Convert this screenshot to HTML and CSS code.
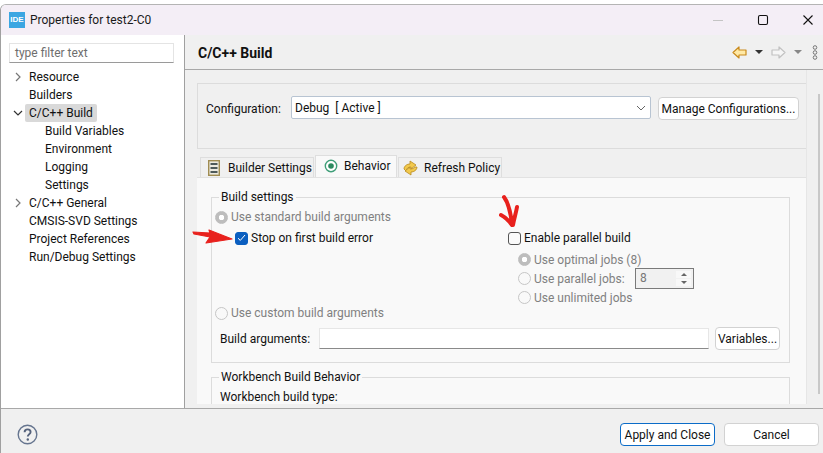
FILE: index.html
```html
<!DOCTYPE html>
<html lang="en">
<head>
<meta charset="utf-8">
<title>Properties for test2-C0</title>
<link rel="stylesheet" href="styles.css">
</head>
<body>
<div class="window">
  <header class="titlebar">
    <span class="logo">IDE</span>
    <span class="title">Properties for test2-C0</span>
    <div class="controls">
      <svg width="12" height="12" viewBox="0 0 12 12" class="ctl"><path d="M1 6.5h10" stroke="#c4c4c4" fill="none"/></svg>
      <svg width="12" height="12" viewBox="0 0 12 12" class="ctl"><rect x="1.5" y="1.5" width="9" height="9" rx="1.5" stroke="#111" stroke-width="1.1" fill="none"/></svg>
      <svg width="12" height="12" viewBox="0 0 12 12" class="ctl"><path d="M1.5 1.5l9 9M10.5 1.5l-9 9" stroke="#111" stroke-width="1.1" fill="none"/></svg>
    </div>
  </header>
  <div class="main">
    <aside class="sidebar">
      <div class="filter">type filter text</div>
      <ul class="tree">
        <li class="node"><svg class="twist" width="10" height="10" viewBox="0 0 10 10"><path d="M3 1l4 4-4 4" stroke="#777" stroke-width="1.2" fill="none"/></svg><span>Resource</span></li>
        <li class="node"><span class="spacer"></span><span>Builders</span></li>
        <li class="node"><svg class="twist" width="10" height="10" viewBox="0 0 10 10"><path d="M1 3l4 4 4-4" stroke="#333" stroke-width="1.2" fill="none"/></svg><span class="selected">C/C++ Build</span></li>
        <li class="node child">Build Variables</li>
        <li class="node child">Environment</li>
        <li class="node child">Logging</li>
        <li class="node child">Settings</li>
        <li class="node"><svg class="twist" width="10" height="10" viewBox="0 0 10 10"><path d="M3 1l4 4-4 4" stroke="#777" stroke-width="1.2" fill="none"/></svg><span>C/C++ General</span></li>
        <li class="node"><span class="spacer"></span><span>CMSIS-SVD Settings</span></li>
        <li class="node"><span class="spacer"></span><span>Project References</span></li>
        <li class="node"><span class="spacer"></span><span>Run/Debug Settings</span></li>
      </ul>
    </aside>
    <main class="content">
      <div class="page-head">
        <h1>C/C++ Build</h1>
        <div class="nav">
          <svg width="15" height="13" viewBox="0 0 15 13"><path d="M1 6.5L7 1v3h7v5H7v3z" fill="#ffe9a6" stroke="#c98a1c" stroke-width="1.2" stroke-linejoin="round"/></svg>
          <span class="caret"></span>
          <svg class="nav-fwd" width="15" height="13" viewBox="0 0 15 13"><path d="M14 6.5L8 1v3H1v5h7v3z" fill="#f6f6f6" stroke="#c2c2c2" stroke-width="1.2" stroke-linejoin="round"/></svg>
          <span class="caret muted"></span>
          <svg class="kebab" width="6" height="15" viewBox="0 0 6 15"><g fill="none" stroke="#777"><circle cx="3" cy="2.5" r="1.8"/><circle cx="3" cy="7.5" r="1.8"/><circle cx="3" cy="12.5" r="1.8"/></g></svg>
        </div>
      </div>
      <div class="scroller">
        <div class="body">
          <section class="config">
            <label class="config-label">Configuration:</label>
            <div class="combo"><span>Debug&nbsp; [ Active ]</span><svg width="10" height="6" viewBox="0 0 10 6"><path d="M1 1l4 4 4-4" stroke="#666" fill="none"/></svg></div>
            <button class="btn manage">Manage Configurations...</button>
          </section>
          <div class="tabs">
            <div class="tab tab-builder">
              <svg width="12" height="16" viewBox="0 0 12 16"><rect x=".7" y=".7" width="10.6" height="14.6" fill="#eceae0" stroke="#a08c52" stroke-width="1.4"/><path d="M2.5 4h7M2.5 8h7M2.5 12h7" stroke="#4e5a5a" stroke-width="2"/></svg>
              Builder Settings
            </div>
            <div class="tab tab-behavior active">
              <svg width="14" height="14" viewBox="0 0 14 14"><circle cx="7" cy="7" r="5.7" fill="#fff" stroke="#3f9e78" stroke-width="1.4"/><circle cx="7" cy="7" r="2.8" fill="#2c8a5f"/></svg>
              Behavior
            </div>
            <div class="tab tab-refresh">
              <svg width="15" height="16" viewBox="0 0 15 16"><g fill="#f2c94c" stroke="#b98a1e" stroke-width=".8" stroke-linejoin="round"><path d="M1 9c0-3 3-5 6-5V1l6 4-5 4V7C5 7 4 8 3 11z"/><path d="M14 7c0 3-3 5-6 5v3L2 11l5-4v2c3 0 4-1 5-2z"/></g></svg>
              Refresh Policy
            </div>
          </div>
          <div class="panel">
            <fieldset class="group settings">
              <legend>Build settings</legend>
              <div class="opt std disabled"><span class="radio on"></span>Use standard build arguments</div>
              <div class="columns">
                <div class="opt stop"><span class="check on"><svg width="9" height="8" viewBox="0 0 9 8"><path d="M1 4.2l2.3 2.2L8 1" stroke="#fff" fill="none"/></svg></span>Stop on first build error</div>
                <div class="parallel">
                  <div class="opt enable"><span class="check"></span>Enable parallel build</div>
                  <div class="opt sub disabled"><span class="radio on"></span>Use optimal jobs (8)</div>
                  <div class="opt sub disabled"><span class="radio"></span><span class="jobs-label">Use parallel jobs:</span>
                    <span class="spin"><span class="spin-val">8</span><span class="spin-btns"><i class="up"></i><i class="down"></i></span></span>
                  </div>
                  <div class="opt sub disabled"><span class="radio"></span>Use unlimited jobs</div>
                </div>
              </div>
              <div class="opt custom disabled"><span class="radio"></span>Use custom build arguments</div>
              <div class="args">
                <span class="args-label">Build arguments:</span>
                <span class="args-field"></span>
                <button class="btn vars">Variables...</button>
              </div>
            </fieldset>
            <fieldset class="group workbench">
              <legend>Workbench Build Behavior</legend>
              <div class="wb-type">Workbench build type:</div>
            </fieldset>
          </div>
        </div>
        <div class="scrollbar"></div>
      </div>
    </main>
  </div>
  <footer class="footer">
    <svg width="21" height="21" viewBox="0 0 21 21"><circle cx="10.5" cy="10.5" r="9.3" fill="none" stroke="#66758f" stroke-width="1.4"/><path d="M7.6 8.2c0-1.8 1.3-2.8 3-2.8s3 1 3 2.6c0 2.2-2.8 2.2-2.8 4.4" fill="none" stroke="#55627c" stroke-width="1.9"/><circle cx="10.8" cy="15.5" r="1.2" fill="#55627c"/></svg>
    <div class="actions">
      <button class="btn primary">Apply and Close</button>
      <button class="btn cancel">Cancel</button>
    </div>
  </footer>
  <svg class="arrow arrow-left" width="46" height="18" viewBox="0 0 46 18"><path d="M1 5L18 6 17 3 40 12 14 16 18 10 2 7z" fill="#e8211d" stroke="#e8211d" stroke-width="1.2" stroke-linejoin="round"/></svg>
  <svg class="arrow arrow-down" width="22" height="34" viewBox="0 0 22 34"><path d="M5 3c3 4 6 10 8 27M2 21c4 2 8 6 11 10M18 13c-1 6-3 12-4 18" fill="none" stroke="#e8211d" stroke-width="4" stroke-linecap="round" stroke-linejoin="round"/></svg>
</div>
</body>
</html>
```
FILE: styles.css
```css
* { box-sizing: border-box; }
html, body { margin: 0; height: 100%; }
body {
  background: #fff;
  font-family: Roboto, "Open Sans", sans-serif;
  font-size: 12px;
  color: #111;
  overflow: hidden;
}
ul { list-style: none; margin: 0; padding: 0; }
.window {
  position: relative;
  margin-top: 4px;
  height: 449px;
  display: flex;
  flex-direction: column;
  border-top: 1px solid #b4b4b4;
  border-left: 1px solid #a0a0a0;
  border-top-left-radius: 6px;
  overflow: hidden;
}
.titlebar {
  height: 30px;
  flex: none;
  display: flex;
  align-items: center;
  background: #f4eef6;
  padding-left: 8px;
}
.logo {
  width: 16px;
  height: 16px;
  background: #3ba6e2;
  color: #fff;
  font-family: "Liberation Sans", sans-serif;
  font-size: 8px;
  font-weight: 700;
  line-height: 16px;
  text-align: center;
}
.title { margin-left: 5px; color: #1a1a1a; }
.controls { margin-left: auto; display: flex; gap: 33px; padding-right: 9px; }
.main { flex: 1; display: flex; min-height: 0; }
.sidebar {
  width: 184px;
  flex: none;
  background: #fff;
  border-right: 1px solid #a0a0a0;
  padding: 8px 10px 0 8px;
}
.filter {
  height: 20px;
  width: 165px;
  border: 1px solid #e4e4e4;
  border-bottom-color: #9a9a9a;
  padding-left: 5px;
  line-height: 18px;
  color: #6e6e6e;
}
.tree { margin-top: 5px; }
.node { height: 18px; line-height: 18px; display: flex; align-items: center; margin-left: 4px; white-space: nowrap; }
.twist { flex: none; margin-right: 2px; }
.spacer { width: 12px; flex: none; }
.node > span:last-child { padding: 0 4px; }
.selected { background: #d9d9d9; border-radius: 2px; }
.child { padding-left: 32px; }
.content { flex: 1; min-width: 0; background: #f0f0f0; display: flex; flex-direction: column; }
.page-head {
  height: 35px;
  flex: none;
  display: flex;
  align-items: center;
  padding: 0 5px 0 13px;
  border-bottom: 1px solid #a8a8a8;
}
h1 { margin: 0; padding-top: 2px; font-size: 14px; font-weight: 700; }
.nav { margin-left: auto; display: flex; align-items: center; }
.caret { width: 0; height: 0; margin: 0 8px; border: 4px solid transparent; border-top: 4px solid #333; border-bottom: 0; }
.caret.muted { border-top-color: #888; }
.kebab { margin-left: 2px; }
.scroller { flex: 1; min-height: 0; display: flex; overflow: hidden; }
.body { width: 622px; flex: none; padding: 13px 0 0 12px; height: 334px; overflow: hidden; border-right: 1px solid #e6e6e6; }
.scrollbar { width: 2px; margin: 24px 0 0 11px; height: 300px; background: #c8c8c8; }
.config {
  height: 66px;
  width: 613px;
  border: 1px solid #dcdcdc;
  display: flex;
  align-items: flex-start;
  padding: 12px 10px 0 8px;
}
.config-label { width: 85px; flex: none; line-height: 27px; }
.combo {
  width: 360px;
  height: 23px;
  flex: none;
  background: #fff;
  border: 1px solid #b8c4d2;
  border-radius: 2px;
  display: flex;
  align-items: center;
  justify-content: space-between;
  padding: 1px 4px 0 3px;
}
.btn {
  font: inherit;
  color: #111;
  background: #fff;
  border: 1px solid #d2d2d2;
  border-radius: 4px;
  padding: 1px 0 0;
  white-space: nowrap;
}
.manage { width: 143px; height: 23px; margin: 1px 0 0 7px; }
.tabs { display: flex; align-items: flex-end; height: 28px; padding-left: 3px; }
.tab {
  height: 20px;
  flex: none;
  display: flex;
  align-items: center;
  background: #f0f0f0;
  border: 1px solid #dedede;
  border-bottom: 0;
  white-space: nowrap;
}
.tab.active { height: 22px; background: #f9f9f9; padding-bottom: 2px; margin: 0 1px; }
.tab-builder { width: 114px; padding-left: 7px; gap: 8px; }
.tab-behavior { width: 82px; padding-left: 8px; gap: 6px; }
.tab-refresh { width: 104px; padding-left: 4px; gap: 6px; }
.panel {
  background: #f9f9f9;
  width: 609px;
  height: 228px;
  padding: 11px 0 0 14px;
  border-top: 1px solid #e2e2e2;
}
.group {
  margin: 0;
  padding: 0;
  border: 1px solid #dcdcdc;
  width: 579px;
  min-width: 0;
}
legend { padding: 0 2px; margin-left: 7px; line-height: 16px; }
.settings { height: 174px; }
.opt { display: flex; align-items: center; height: 20px; white-space: nowrap; }
.disabled { color: #808080; }
.radio {
  width: 13px;
  height: 13px;
  flex: none;
  border: 1.5px solid #c6c6c6;
  border-radius: 50%;
  background: #f9f9f9;
  margin-right: 3px;
}
.radio.on { background: radial-gradient(circle, #fff 0 2.5px, #bdbdbd 3px); border-color: #bdbdbd; }
.check {
  width: 13px;
  height: 13px;
  flex: none;
  border: 1px solid #555;
  border-radius: 3px;
  background: #fafafa;
  margin-right: 3px;
  display: flex;
  align-items: center;
  justify-content: center;
}
.check.on { background: #0b5fc0; border-color: #0b5fc0; }
.std { margin-top: 2px; padding-left: 3px; }
.columns { display: flex; align-items: flex-start; margin-top: 1px; }
.stop { width: 296px; padding-left: 23px; flex: none; }
.parallel { flex: 1; height: 75px; }
.sub { padding-left: 10px; height: 19px; }
.enable { height: 20px; margin-bottom: 2px; }
.jobs-label { width: 101px; flex: none; }
.spin {
  width: 59px;
  height: 21px;
  border: 1px solid #7a7a7a;
  background: #f1f1f1;
  display: flex;
  justify-content: space-between;
  padding: 2px;
  line-height: 15px;
  color: #777;
}
.spin-val { padding-left: 2px; }
.spin-btns { width: 15px; display: flex; flex-direction: column; gap: 1px; }
.spin-btns i { flex: 1; background: #f8f8f8; display: flex; align-items: center; justify-content: center; }
.spin-btns i::before { content: ""; border: 3px solid transparent; }
.up::before { border-bottom: 3px solid #666 !important; border-top: 0 !important; }
.down::before { border-top: 3px solid #666 !important; border-bottom: 0 !important; }
.custom { padding-left: 3px; }
.args { display: flex; align-items: center; height: 23px; margin-top: 4px; padding-left: 8px; }
.args-label { width: 99px; flex: none; }
.args-field { width: 390px; height: 21px; background: #fff; border: 1px solid #e6e6e6; border-bottom-color: #8a8a8a; }
.vars { width: 65px; height: 23px; margin-left: 6px; }
.workbench { margin-top: 6px; height: 60px; }
.wb-type { padding: 3px 0 0 8px; line-height: 18px; }
.footer {
  height: 45px;
  flex: none;
  background: #f0f0f0;
  border-top: 1px solid #a8a8a8;
  display: flex;
  align-items: center;
  padding: 6px 4px 0 16px;
  justify-content: space-between;
}
.actions { display: flex; gap: 9px; }
.actions .btn { width: 95px; height: 23px; }
.primary { border-color: #0b6cc8 !important; }
.arrow { position: absolute; }
.arrow-left { left: 191px; top: 222px; }
.arrow-down { left: 498px; top: 189px; }
```
